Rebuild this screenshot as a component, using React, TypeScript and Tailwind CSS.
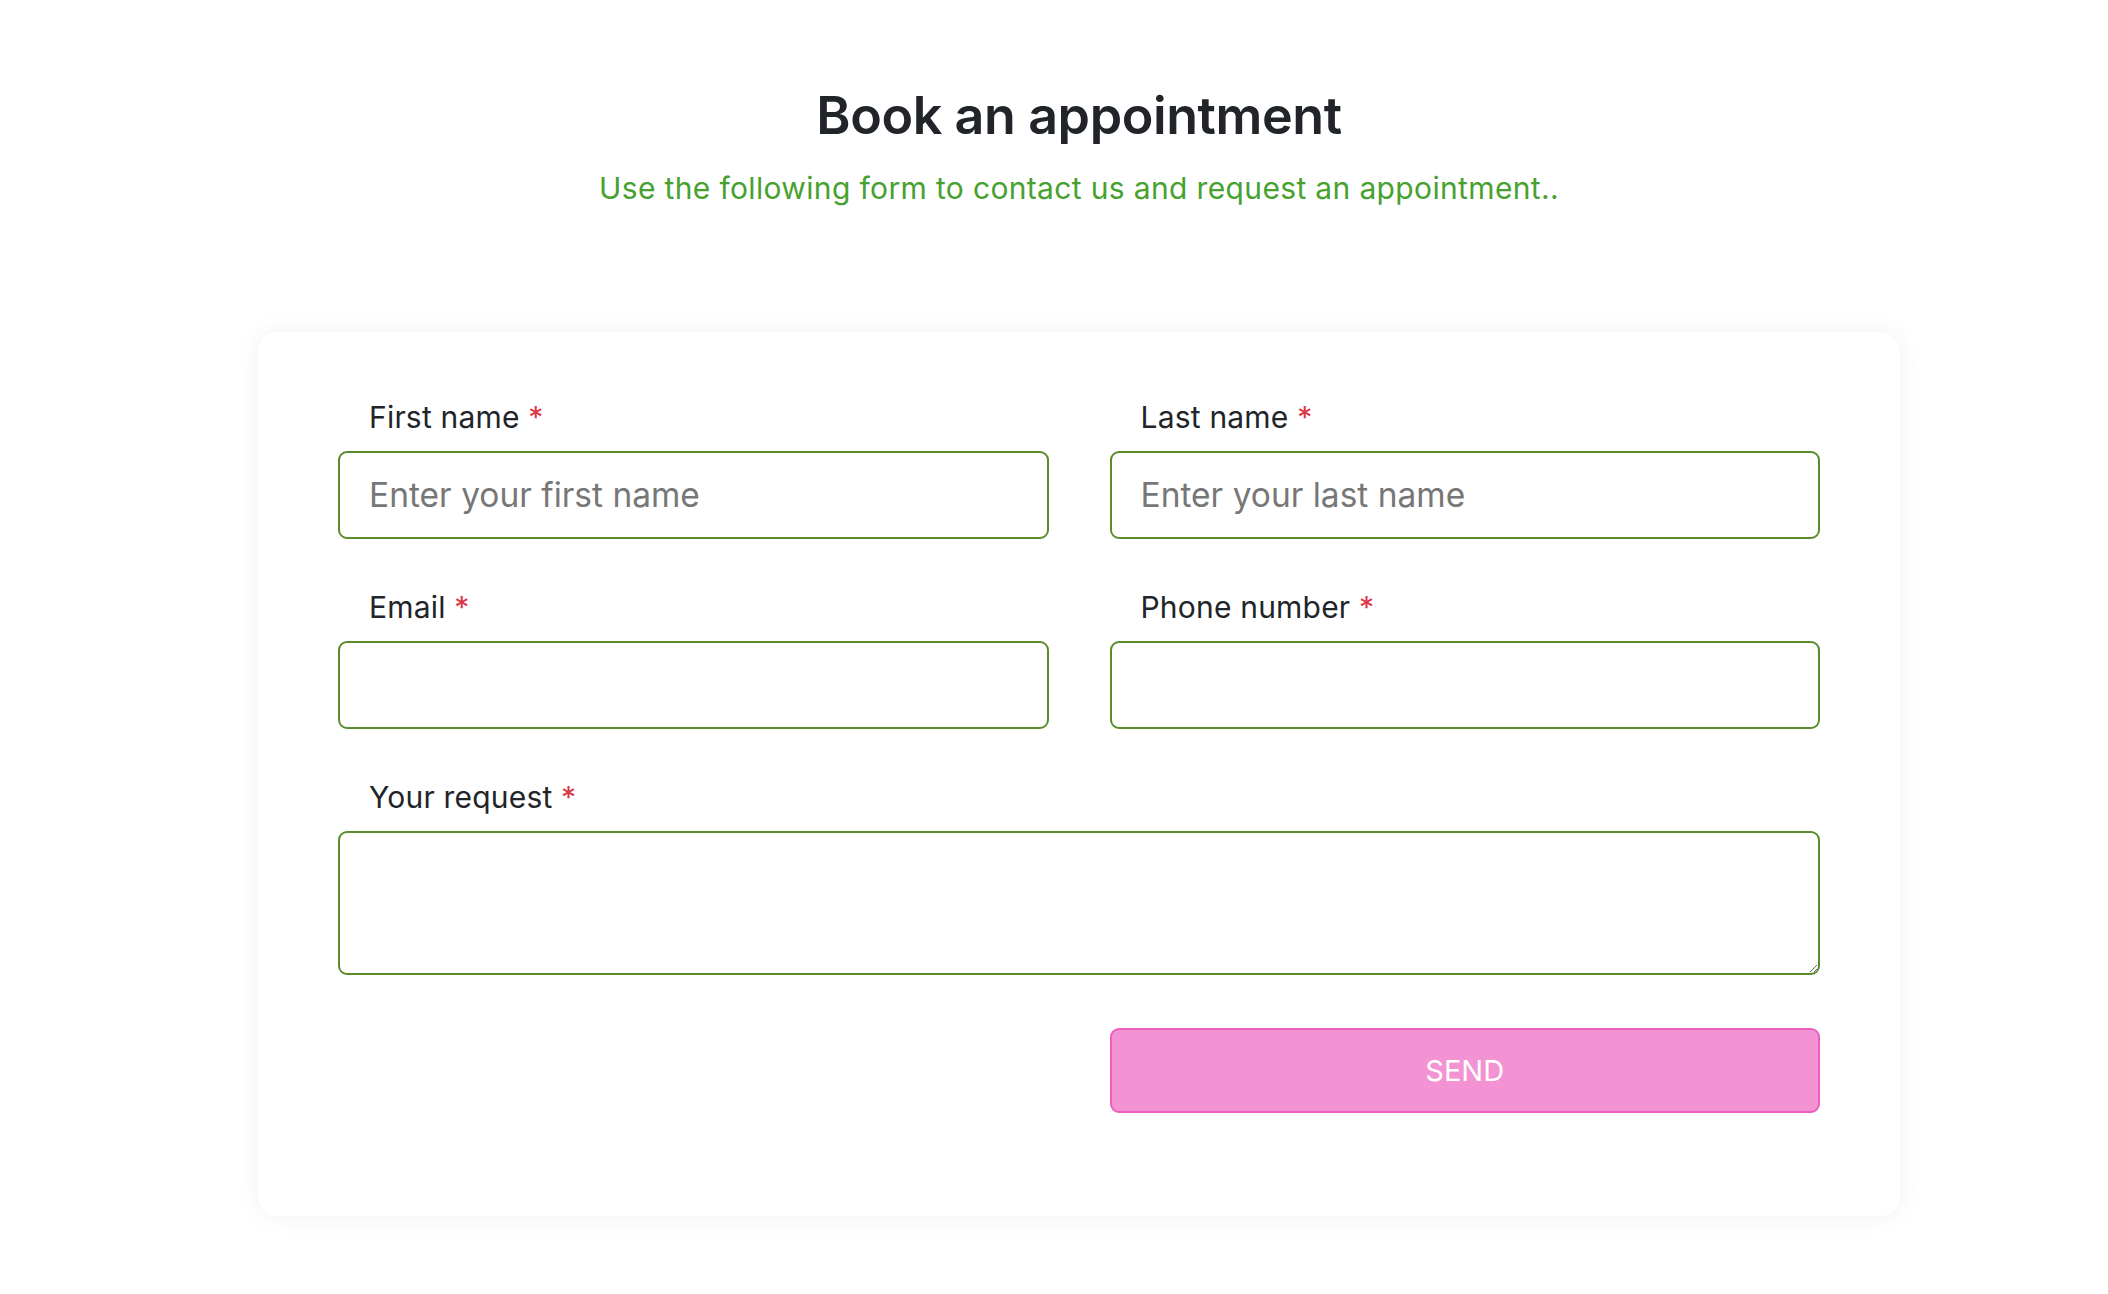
import React from "react";

const fields = [
  { id: "firstName", label: "First name", placeholder: "Enter your first name", type: "text" },
  { id: "lastName", label: "Last name", placeholder: "Enter your last name", type: "text" },
  { id: "email", label: "Email", placeholder: "", type: "email" },
  { id: "phone", label: "Phone number", placeholder: "", type: "tel" },
];

const Label = ({ htmlFor, text }: { htmlFor: string; text: string }) => (
  <label
    htmlFor={htmlFor}
    className="block ml-[31px] mb-[11px] text-[30px] leading-[45px] tracking-[0.2px] text-[#212529]"
  >
    {text} <span className="text-[#dc3545]">*</span>
  </label>
);

export default function App() {
  return (
    <div
      className="min-h-screen bg-white pl-[50px] pt-[85px] pb-[80px]"
      style={{ fontFamily: "Inter, 'Noto Sans', sans-serif" }}
    >
      <div className="mx-auto w-[1642px]">
        <h1 className="text-center text-[52px] leading-[62px] font-semibold tracking-[-0.4px] text-[#212529]">
          Book an appointment
        </h1>
        <p className="mt-[20px] text-center text-[30px] leading-[43px] tracking-[0.35px] text-[#47a12f]">
          Use the following form to contact us and request an appointment..
        </p>

        <form className="mt-[122px] rounded-[20px] bg-white px-[80px] pt-[63px] pb-[103px] shadow-[0_0_26px_rgba(0,0,0,0.06)]">
          <div className="grid grid-cols-2 gap-x-[61px] gap-y-[46px]">
            {fields.map((f) => (
              <div key={f.id}>
                <Label htmlFor={f.id} text={f.label} />
                <input
                  id={f.id}
                  type={f.type}
                  placeholder={f.placeholder}
                  className="block h-[88px] w-full rounded-[9px] border-2 border-[#5a8c2b] bg-white px-[29px] text-[33.5px] text-[#212529] outline-none placeholder:text-[#777777]"
                />
              </div>
            ))}
            <div className="col-span-2">
              <Label htmlFor="request" text="Your request" />
              <textarea
                id="request"
                className="block h-[144px] w-full rounded-[9px] border-2 border-[#5a8c2b] bg-white px-[29px] py-[20px] text-[33.5px] text-[#212529] outline-none"
              />
            </div>
          </div>

          <div className="mt-[53px] grid grid-cols-2 gap-x-[61px]">
            <div />
            <button
              type="button"
              className="h-[85px] w-full rounded-[9px] border-2 border-[#ec5fbf] bg-[#f393d3] text-[29px] uppercase text-white"
            >
              Send
            </button>
          </div>
        </form>
      </div>
    </div>
  );
}
